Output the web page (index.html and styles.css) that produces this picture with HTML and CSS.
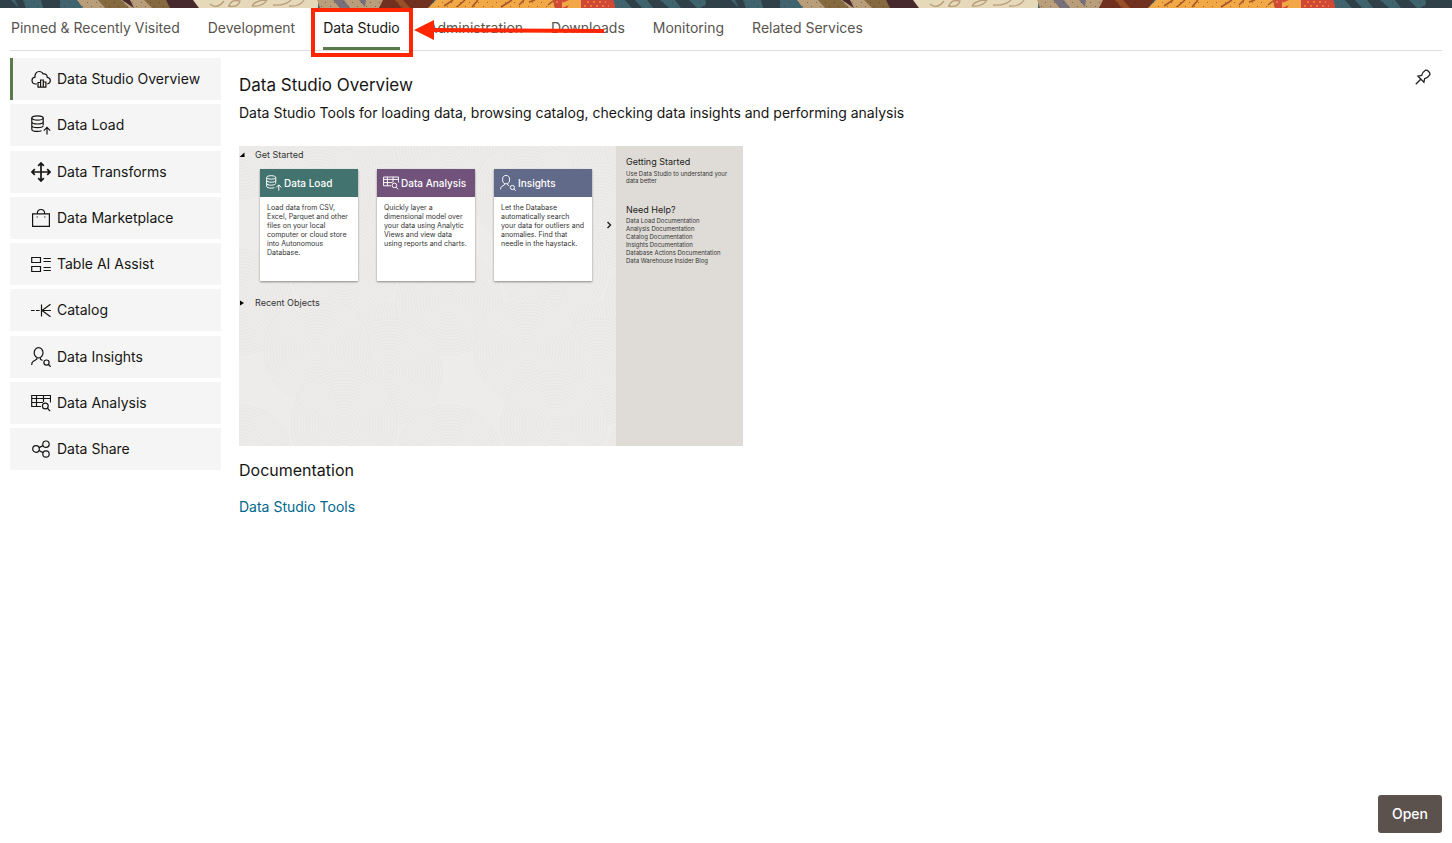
FILE: index.html
```html
<!DOCTYPE html>
<html lang="en">
<head>
<meta charset="utf-8">
<title>Data Studio Overview</title>
<link rel="stylesheet" href="styles.css">
</head>
<body>
<svg class="defs" aria-hidden="true">
  <defs>
    <symbol id="i-cloud" viewBox="0 0 20 20"><path d="M6 15H4.6A3.7 3.7 0 0 1 1 11.500C1 9.500 2.300 8.400 4 8.200C3.600 5 5.500 2.500 8.200 2.500C10.200 2.500 11.500 3.500 12.200 5C14.500 4.400 16.300 6 16.200 8.300C18 8.500 19.300 9.700 19.300 11.600C19.300 13.500 18 14.800 16.200 15"/><path d="M7 18V13.500H9.600V18M9.600 18V11H12.300V18M12.300 18V13H14.900V18M6.500 18.200H15.400"/></symbol>
    <symbol id="i-load" viewBox="0 0 20 20"><ellipse cx="6.500" cy="3" rx="5.700" ry="2.200"/><path d="M.8 3V14.200C.8 15.500 3.500 16.400 6.500 16.400C8 16.400 9.500 16.200 10.500 15.800M12.200 3V10M.8 6.800C.8 8.100 3.500 9 6.500 9S12.200 8.100 12.200 6.800M.8 10.500C.8 11.800 3.500 12.700 6.500 12.700S12.200 11.800 12.200 10.500M16 19.500V12.500M12.800 15.600L16 12.300L19.200 15.600"/></symbol>
    <symbol id="i-move" viewBox="0 0 20 20"><path stroke-width="1.700" d="M10 1V19M1 10H19M7.200 3.800L10 1L12.800 3.800M7.200 16.200L10 19L12.800 16.200M3.800 7.200L1 10L3.800 12.800M16.200 7.200L19 10L16.200 12.800"/></symbol>
    <symbol id="i-bag" viewBox="0 0 20 20"><path d="M1.600 5.800H18.400V18.400H1.600ZM6.300 5.800C6.300 3 7.800 1.500 10 1.500S13.700 3 13.700 5.800M6.200 8.600V9.600M13.800 8.600V9.600"/></symbol>
    <symbol id="i-table" viewBox="0 0 20 20"><path d="M.7 3.500H9.500V8.500H.7ZM.7 12.500H9.500V17.500H.7ZM12.500 4.500H19.800M12.500 7.500H19.800M12.500 13.500H19.800M12.500 16.500H19.800"/></symbol>
    <symbol id="i-catalog" viewBox="0 0 20 20"><path d="M0 10.500H3.600M5 10.500H8.600M10.500 4.500V16.500M10.500 10.500H20M19.500 4.200L11 10.500L19.500 16.800"/></symbol>
    <symbol id="i-person" viewBox="0 0 20 20"><ellipse cx="7.600" cy="5.800" rx="4.400" ry="5.200"/><path d="M5.800 10.700V12.200L2 14.500Q.7 15.300.7 18M9.400 10.700V12.200L11.500 13.500"/><circle cx="15.500" cy="15.600" r="2.600"/><path d="M17.400 17.500L19.700 19.800"/></symbol>
    <symbol id="i-analysis" viewBox="0 0 20 20"><path d="M10 13.500H.7V2.500H19.500V9.500M.7 5.500H19.500M.7 9.500H12M5.500 2.500V13.500M12.500 2.500V9"/><circle cx="14.300" cy="13" r="2.900"/><path d="M16.400 15.200L19 18"/></symbol>
    <symbol id="i-share" viewBox="0 0 20 20"><circle cx="5" cy="10" r="3.300"/><circle cx="15" cy="5.200" r="3.200"/><circle cx="15" cy="15" r="3.200"/><path d="M8 8.600L12.100 6.600M8 11.500L12.100 13.600"/></symbol>
    <pattern id="ribbon" x="-105" width="720" height="8" patternUnits="userSpaceOnUse">
      <rect width="720" height="8" fill="#40646d"/>
      <path fill="#2f4048" d="M10 0H20L27 8H17ZM32 0H45L54 8H38ZM60 0H74L82 8H66ZM90 0H116L124 8H84Q94 5 90 0ZM120 0H128L131 8H124ZM146 0H165V8H148Z"/>
      <path fill="#b99e7c" d="M182 0H282V8H188Z"/>
      <path fill="#85693f" d="M203 0H226L234 8H210ZM249 0H271L277 8H257Z"/>
      <path fill="#45292d" d="M227 0H235L239 8ZM271 0H300L304 8H275Z"/>
      <path fill="#e6d9b9" d="M298 0H423V8H304Z"/>
      <path fill="none" stroke="#b99e7c" stroke-width="1.300" d="M315 4Q322 10 329 1M333 6Q343 8 345 1Q336-1 334 6M357 6Q368 7 372 0Q360 0 357 6M378 5Q390 6 396 0M394 6Q405 7 409 0"/>
      <path fill="#b99e7c" d="M422 0H489L484 8H425Z"/>
      <path fill="#77707a" d="M438 0H449L455 8H445ZM464 0L470 7L471 0Z"/>
      <path fill="#713020" d="M488 0H539L533 8H484Z"/>
      <path fill="#995028" d="M500 0H508L515 8H507Z"/>
      <path fill="#f1a846" d="M541 0H658L660 8H533Z"/>
      <path fill="none" stroke="#a85528" stroke-width="1.600" d="M549 6L558 0M562 7L570 0M577 7L583 0M606 7L617 0M624 5L629 0M634 2L640 0M653 5L658 1"/>
      <path fill="#d04836" d="M658 0H718L721 8H660Z"/>
      <path fill="#f1a846" d="M667 3L674 0H686V8H672L674 5L667 8Z"/>
      <path fill="none" stroke="#f08a40" stroke-width="1.500" stroke-dasharray="2 4" d="M661 2H668M689 6H714M692 2H711"/>
      <path fill="none" stroke="#382c25" stroke-opacity=".5" stroke-dasharray="1 8" d="M3 2.500H295M430 2.500H655M7 6.500H290M426 6.500H655"/>
    </pattern>
    <g id="rings" fill="#edecea" stroke="#e8e7e5"><circle r="53"/><circle r="50"/><circle r="47"/><circle r="44"/><circle r="41"/><circle r="38"/><circle r="35"/><circle r="32"/><circle r="29"/><circle r="26"/><circle r="23"/><circle r="20"/><circle r="17"/><circle r="14"/><circle r="11"/><circle r="8"/><circle r="5"/><circle r="2"/></g>
    <pattern id="swirl" width="210" height="156" patternUnits="userSpaceOnUse">
      <rect width="210" height="156" fill="#edecea"/>
      <use href="#rings" x="0" y="0"/><use href="#rings" x="210" y="0"/>
      <use href="#rings" x="105" y="20"/>
      <use href="#rings" x="150" y="70"/><use href="#rings" x="-60" y="70"/>
      <use href="#rings" x="78" y="48"/>
      <use href="#rings" x="0" y="156"/><use href="#rings" x="210" y="156"/>
      <use href="#rings" x="105" y="122"/>
    </pattern>
  </defs>
</svg>

<svg class="banner" aria-hidden="true"><rect width="100%" height="8" fill="url(#ribbon)"/></svg>

<nav class="tabs" aria-label="Categories">
  <a class="tab" href="#pinned">Pinned &amp; Recently Visited</a>
  <a class="tab" href="#development">Development</a>
  <a class="tab tab-active" href="#studio" aria-current="page">Data Studio
    <span class="callout"></span>
    <svg class="arrow" viewBox="0 0 190 20" aria-hidden="true"><path fill="#ff2600" d="M0 10L20 0V8L190 9V13L20 12V20Z"/></svg>
  </a>
  <a class="tab" href="#administration">Administration</a>
  <a class="tab" href="#downloads">Downloads</a>
  <a class="tab" href="#monitoring">Monitoring</a>
  <a class="tab" href="#related">Related Services</a>
</nav>

<div class="layout">
  <nav class="side" aria-label="Data Studio">
    <a class="item item-active" href="#overview"><svg class="icon"><use href="#i-cloud"/></svg>Data Studio Overview</a>
    <a class="item" href="#load"><svg class="icon"><use href="#i-load"/></svg>Data Load</a>
    <a class="item" href="#transforms"><svg class="icon"><use href="#i-move"/></svg>Data Transforms</a>
    <a class="item" href="#marketplace"><svg class="icon"><use href="#i-bag"/></svg>Data Marketplace</a>
    <a class="item" href="#table"><svg class="icon"><use href="#i-table"/></svg>Table AI Assist</a>
    <a class="item" href="#catalog"><svg class="icon"><use href="#i-catalog"/></svg>Catalog</a>
    <a class="item" href="#insights"><svg class="icon"><use href="#i-person"/></svg>Data Insights</a>
    <a class="item" href="#analysis"><svg class="icon"><use href="#i-analysis"/></svg>Data Analysis</a>
    <a class="item" href="#share"><svg class="icon"><use href="#i-share"/></svg>Data Share</a>
  </nav>

  <main class="main">
    <h1 class="title">Data Studio Overview</h1>
    <p class="lead">Data Studio Tools for loading data, browsing catalog, checking data insights and performing analysis</p>

    <section class="preview">
      <div class="stage">
        <svg class="texture" aria-hidden="true"><rect width="100%" height="100%" fill="url(#swirl)"/></svg>
        <div class="stage-body">
          <div class="group"><svg class="mark" viewBox="0 0 6 6"><path d="M5.500.500V5H.5Z"/></svg>Get Started</div>
          <div class="cards">
            <article class="card">
              <h2 class="card-head teal"><svg class="icon card-icon"><use href="#i-load"/></svg>Data Load</h2>
              <p class="card-text">Load data from CSV,<br>Excel, Parquet and other<br>files on your local<br>computer or cloud store<br>into Autonomous<br>Database.</p>
            </article>
            <article class="card">
              <h2 class="card-head plum"><svg class="icon card-icon"><use href="#i-analysis"/></svg>Data Analysis</h2>
              <p class="card-text">Quickly layer a<br>dimensional model over<br>your data using Analytic<br>Views and view data<br>using reports and charts.</p>
            </article>
            <article class="card">
              <h2 class="card-head slate"><svg class="icon card-icon"><use href="#i-person"/></svg>Insights</h2>
              <p class="card-text">Let the Database<br>automatically search<br>your data for outliers and<br>anomalies. Find that<br>needle in the haystack.</p>
            </article>
            <svg class="next" viewBox="0 0 6 8"><path d="M1.500 1L4.500 4L1.500 7"/></svg>
          </div>
          <div class="group"><svg class="mark" viewBox="0 0 6 6"><path d="M1 .5L5 3L1 5.500Z"/></svg>Recent Objects</div>
        </div>
      </div>
      <aside class="help">
        <h2 class="help-title">Getting Started</h2>
        <p class="help-text">Use Data Studio to understand your<br>data better</p>
        <h2 class="help-title">Need Help?</h2>
        <ul class="help-list">
          <li>Data Load Documentation</li>
          <li>Analysis Documentation</li>
          <li>Catalog Documentation</li>
          <li>Insights Documentation</li>
          <li>Database Actions Documentation</li>
          <li>Data Warehouse Insider Blog</li>
        </ul>
      </aside>
    </section>

    <h2 class="subtitle">Documentation</h2>
    <a class="link" href="#tools">Data Studio Tools</a>
  </main>

  <button class="pin" type="button" aria-label="Pin"><svg viewBox="0 0 16 16"><path d="M.8 15.200L5.500 10.500M3 7.200L8.900 13.100L9.700 9.600C12.300 9 13.500 7.800 14.900 5.600C15.300 3.300 12.700.900 10.400 1.200C8.300 2.500 7.200 3.900 6.600 6.500Z"/></svg></button>
</div>

<footer class="footer"><button class="open" type="button">Open</button></footer>
</body>
</html>
```

FILE: styles.css
```css
* { box-sizing: border-box; }

body {
  margin: 0;
  min-height: 100vh;
  display: flex;
  flex-direction: column;
  background: #fff;
  color: #161513;
  font: 14px/20px Inter, "Liberation Sans", sans-serif;
}

h1, h2, p, ul { margin: 0; padding: 0; font-weight: 400; }
a { color: inherit; text-decoration: none; }

.defs { position: absolute; width: 0; height: 0; }
.banner { display: block; width: 100%; height: 8px; }

.tabs {
  display: flex;
  gap: 28px;
  margin: 0 10px;
  padding-left: 1px;
  border-bottom: 1px solid #dedede;
  color: #58544f;
}
.tab { padding: 10px 0 12px; white-space: nowrap; }
.tab-active {
  position: relative;
  padding-bottom: 9px;
  border-bottom: 3px solid #5b7a49;
  color: #161513;
}
.callout {
  position: absolute;
  inset: 0 -13px -10px -12px;
  border: 4px solid #ff2600;
}
.arrow {
  position: absolute;
  z-index: 1;
  left: calc(100% + 14px);
  top: 12px;
  width: 190px;
  height: 20px;
}

.layout { flex: 1; display: flex; align-items: flex-start; padding: 7px 20px 0 10px; }

.side {
  flex: none;
  display: flex;
  flex-direction: column;
  justify-content: space-between;
  width: 211px;
  min-height: 412px;
}
.item {
  display: flex;
  align-items: center;
  gap: 6px;
  height: 42px;
  padding-left: 21px;
  background: #f5f5f5;
}
.item-active { padding-left: 18px; border-left: 3px solid #5b7a49; }
.icon {
  flex: none;
  width: 20px;
  height: 20px;
  fill: none;
  stroke: currentColor;
  stroke-width: 1.2;
}

.main { flex: 1; padding: 15px 0 0 18px; }
.title { font-size: 17px; line-height: 24px; }
.lead { margin-top: 6px; }
.subtitle { margin-top: 12px; font-size: 16px; line-height: 24px; }
.link { display: inline-block; margin-top: 15px; color: #00688c; }

.preview { display: flex; width: 504px; min-height: 300px; margin-top: 23px; color: #333; }
.stage { position: relative; flex: 1; }
.texture { position: absolute; width: 100%; height: 100%; }
.stage-body { position: relative; padding-top: 2px; }
.group {
  display: flex;
  align-items: center;
  gap: 10px;
  font-size: 9px;
  line-height: 13px;
}
.mark { width: 6px; height: 6px; }
.cards { display: flex; gap: 19px; padding: 8px 0 15px 21px; }
.card {
  flex: none;
  width: 98px;
  height: 112px;
  background: #fff;
  box-shadow: 0 1px 2px #888;
}
.card-head {
  display: flex;
  align-items: center;
  gap: 2px;
  height: 28px;
  padding-left: 6px;
  color: #fff;
  font-size: 10px;
  font-weight: 500;
  white-space: nowrap;
}
.card-icon { width: 16px; height: 16px; }
.teal { background: #42736e; }
.plum { background: #70527a; }
.slate { background: #626a89; }
.card-text { padding: 6px 7px; font-size: 7px; line-height: 9px; white-space: nowrap; }
.next { align-self: center; width: 6px; height: 8px; margin-left: -5px; fill: none; stroke: #222; stroke-width: 1.4; }

.help { width: 127px; padding: 9px 10px; background: #dfdcd7; }
.help-title { color: #222; font-size: 9px; line-height: 14px; }
.help-text { min-height: 34px; padding-top: 1px; font-size: 6px; line-height: 7px; white-space: nowrap; }
.help-list { font-size: 6px; line-height: 8px; list-style: none; white-space: nowrap; }

.pin { width: 18px; height: 18px; margin-top: 10px; padding: 0; border: 0; background: none; }
.pin svg { display: block; width: 16px; height: 16px; margin: 0 auto; fill: none; stroke: #222; stroke-width: 1.3; }

.footer { display: flex; justify-content: flex-end; padding: 10px; }
.open {
  height: 38px;
  padding: 0 14px;
  border: 0;
  border-radius: 3px;
  background: #5b524e;
  color: #fff;
  font: 500 14px/20px Inter, "Liberation Sans", sans-serif;
}
```
